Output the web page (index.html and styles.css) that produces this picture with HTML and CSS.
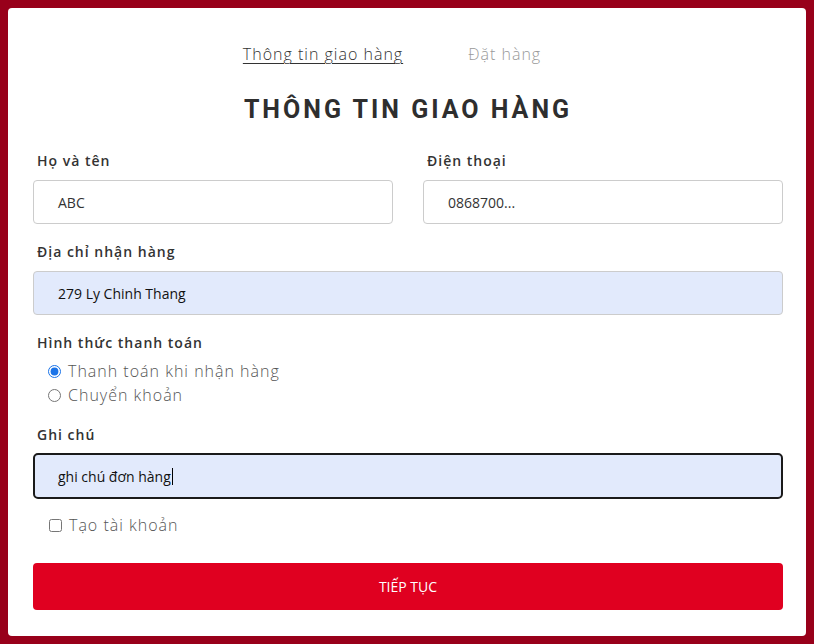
FILE: index.html
```
<!DOCTYPE html>
<html lang="vi">
<head>
<meta charset="utf-8">
<link rel="stylesheet" href="styles.css">
</head>
<body>
<div class="card">
  <div class="content">
    <nav class="tabs">
      <span class="tab active">Thông tin giao hàng</span>
      <span class="tab">Đặt hàng</span>
    </nav>
    <h1 class="title">THÔNG TIN GIAO HÀNG</h1>
    <div class="row">
      <div class="field">
        <label class="label">Họ và tên</label>
        <div class="input">ABC</div>
      </div>
      <div class="field">
        <label class="label">Điện thoại</label>
        <div class="input">0868700...</div>
      </div>
    </div>
    <div class="field">
      <label class="label">Địa chỉ nhận hàng</label>
      <div class="input autofill">279 Ly Chinh Thang</div>
    </div>
    <div class="field">
      <label class="label">Hình thức thanh toán</label>
      <div class="options">
        <label class="option"><input type="radio" name="pay" checked> Thanh toán khi nhận hàng</label>
        <label class="option"><input type="radio" name="pay"> Chuyển khoản</label>
      </div>
    </div>
    <div class="field">
      <label class="label">Ghi chú</label>
      <div class="input autofill focus">ghi chú đơn hàng<span class="caret"></span></div>
    </div>
    <label class="option check"><input type="checkbox"> Tạo tài khoản</label>
    <button class="btn">TIẾP TỤC</button>
  </div>
</div>
</body>
</html>
```
FILE: styles.css
```
html, body { height: 100%; }
body {
  margin: 0;
  padding: 8px;
  box-sizing: border-box;
  background: #98001a;
  font-family: "Open Sans", "Liberation Sans", sans-serif;
  color: #333;
}
.card {
  background: #fff;
  border-radius: 4px;
  height: 100%;
  box-sizing: border-box;
  padding: 34px 23px 0 25px;
}
.content {
  display: flex;
  flex-direction: column;
}
.tabs {
  display: flex;
  justify-content: center;
  gap: 65px;
  padding-right: 32px;
  font-size: 16px;
  font-weight: 300;
  line-height: 24px;
  letter-spacing: 1px;
}
.tab { color: #999; }
.tab.active { color: #333; text-decoration: underline; text-underline-offset: 3px; text-decoration-thickness: 1px; }
.title {
  margin: 28px 0 7px;
  text-align: center;
  font-family: "Roboto", "Liberation Sans", sans-serif;
  font-weight: 700;
  font-size: 25px;
  line-height: 32px;
  letter-spacing: 3px;
  color: #2e2e2e;
}
.row {
  display: grid;
  grid-template-columns: 1fr 1fr;
  gap: 30px;
}
.field { display: flex; flex-direction: column; }
.label {
  margin-top: 18px;
  padding-left: 4px;
  font-size: 14px;
  font-weight: 600;
  letter-spacing: 1px;
  line-height: 20px;
  color: #333;
}
.input {
  margin-top: 9px;
  height: 44px;
  box-sizing: border-box;
  border: 1px solid #ccc;
  border-radius: 4px;
  padding: 0 24px;
  display: flex;
  align-items: center;
  font-size: 14px;
  color: #333;
}
.autofill { background: #e2eafc; color: #111; }
.focus { height: 46px; margin-top: 8px; border: 2px solid #1a1a1a; border-radius: 5px; padding-left: 23px; }
.caret { display: inline-block; width: 1px; height: 17px; background: #000; margin-left: 1px; }
.options { display: flex; flex-direction: column; margin-top: 6px; padding-left: 15px; }
.option {
  display: flex;
  align-items: center;
  gap: 7px;
  font-size: 16px;
  font-weight: 300;
  letter-spacing: 1px;
  line-height: 24px;
  color: #555;
}
.option input { margin: 0; width: 13px; height: 13px; accent-color: #1a73e8; }
.check { margin-top: 14px; padding-left: 16px; }
.btn {
  margin-top: 26px;
  height: 47px;
  border: 0;
  border-radius: 4px;
  background: #e00020;
  color: #fff;
  font-family: "Open Sans", "Liberation Sans", sans-serif;
  font-size: 14px;
  font-weight: 400;
}
```
